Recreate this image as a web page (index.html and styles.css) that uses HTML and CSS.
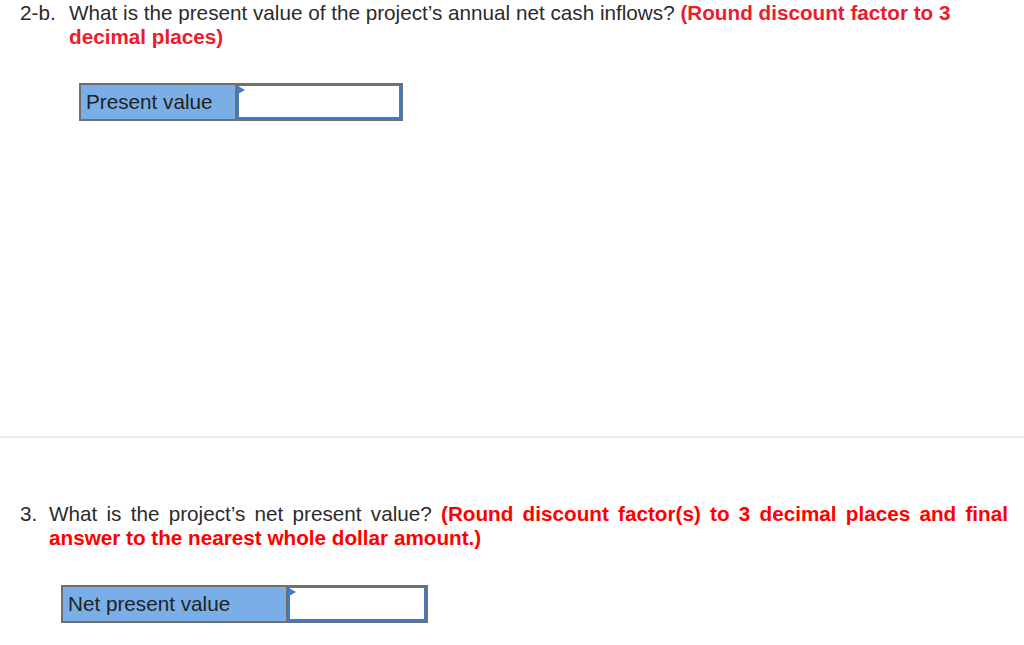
FILE: index.html
```html
<!DOCTYPE html>
<html>
<head>
<meta charset="utf-8">
<link rel="stylesheet" href="styles.css">
</head>
<body>
<section class="part part-one">
  <div class="question">
    <span class="num num-wide">2-b.</span>
    <p class="qtext">What is the present value of the project’s annual net cash inflows? <strong class="note note-a">(Round discount factor to 3 decimal places)</strong></p>
  </div>
  <div class="answer answer-one">
    <div class="label label-one">Present value</div>
    <div class="cell cell-one"><div class="field"><span class="flag"></span></div></div>
  </div>
</section>
<section class="part part-two">
  <div class="question">
    <span class="num num-narrow">3.</span>
    <p class="qtext justify">What is the project’s net present value? <strong class="note note-b">(Round discount factor(s) to 3 decimal places and final answer to the nearest whole dollar amount.)</strong></p>
  </div>
  <div class="answer answer-two">
    <div class="label label-two">Net present value</div>
    <div class="cell cell-two"><div class="field"><span class="flag"></span></div></div>
  </div>
</section>
</body>
</html>
```
FILE: styles.css
```css
html, body {
  margin: 0;
  padding: 0;
  background: #fff;
}
body {
  font-family: "Liberation Sans", Arial, sans-serif;
  font-size: 20.7px;
  line-height: 24px;
  color: #2b2b2b;
}
.part-one {
  box-sizing: border-box;
  height: 438px;
  padding-top: 1px;
  border-bottom: 2px solid #ececec;
}
.part-two {
  padding-top: 64px;
}
.question {
  display: flex;
  padding-left: 20px;
  padding-right: 16px;
}
.num-wide { width: 49px; flex: none; }
.num-narrow { width: 29px; flex: none; }
.qtext {
  margin: 0;
  flex: 1;
}
.justify { text-align: justify; }
.note { font-weight: bold; }
.note-a { color: #ee1b2c; }
.note-b { color: #ff0000; }
.answer {
  display: flex;
  height: 38px;
  margin-top: 35px;
}
.part-one .answer { margin-top: 34px; }
.answer-one { margin-left: 79px; }
.answer-two { margin-left: 61px; }
.label {
  box-sizing: border-box;
  background: #7aaee6;
  border: 2px solid #6f6f6f;
  border-right-width: 1px;
  padding-left: 5px;
  display: flex;
  align-items: center;
  color: #232323;
}
.label-one { width: 157px; }
.label-two { width: 226px; }
.cell {
  box-sizing: border-box;
  border: 2px solid #6f6f6f;
  border-left-width: 1px;
  background: #fff;
}
.cell-one { width: 167px; }
.cell-two { width: 141px; }
.field {
  position: relative;
  box-sizing: border-box;
  height: 100%;
  border: 2px solid #3d7bcb;
  border-top-width: 1px;
}
.flag {
  position: absolute;
  left: -1px;
  top: 0;
  width: 0;
  height: 0;
  border-top: 4px solid transparent;
  border-bottom: 4px solid transparent;
  border-left: 7px solid #3d7bcb;
}
```
